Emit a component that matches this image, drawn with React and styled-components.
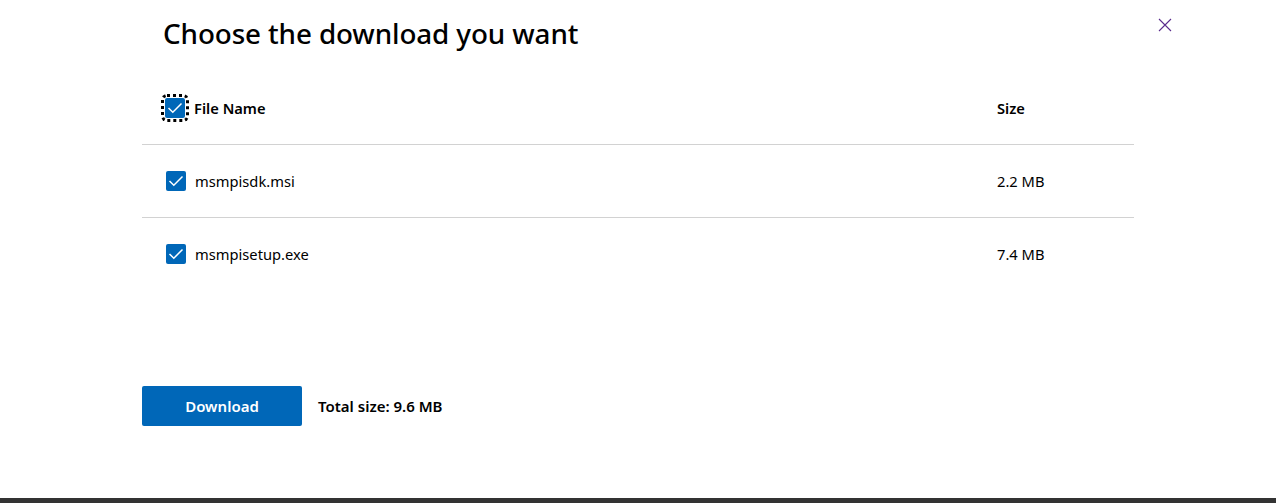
import styled, { createGlobalStyle } from "styled-components";

const Global = createGlobalStyle`
  html, body { margin: 0; padding: 0; background: #fff; }
  body { font-family: "Noto Sans", "Open Sans", sans-serif; color: #000; }
`;

const Page = styled.div`
  position: relative;
  height: 503px;
  display: flex;
  flex-direction: column;
`;

const Dialog = styled.div`
  flex: 1;
  padding: 0 142px;
`;

const Title = styled.h1`
  margin: 14px 0 0 21px;
  font-size: 27.8px;
  line-height: 38px;
  font-weight: 500;
  letter-spacing: -0.1px;
`;

const Close = styled.button`
  position: absolute;
  top: 17px;
  left: 1157px;
  width: 16px;
  height: 16px;
  padding: 0;
  border: none;
  background: none;
  cursor: pointer;
`;

const Table = styled.table`
  width: 992px;
  margin-top: 20px;
  border-collapse: collapse;
  font-size: 14.7px;

  th, td {
    height: 72px;
    padding: 0;
    border-bottom: 1px solid #d2d2d2;
  }
  th {
    text-align: left;
    font-weight: 600;
  }
  tbody tr:last-child td { border-bottom: none; }
  th:first-child, td:first-child { padding-left: 24px; }
  th:last-child, td:last-child { width: 137px; }
`;

const NameCell = styled.div`
  display: flex;
  align-items: center;
  gap: 9px;
`;

const Box = styled.span`
  width: 20px;
  height: 20px;
  flex: none;
  box-sizing: border-box;
  background: #0067b8;
  border-radius: 2px;
  display: flex;
  align-items: center;
  justify-content: center;
  outline: ${(p) => (p.$focus ? "3px dotted #000" : "none")};
  outline-offset: 1px;
  margin-left: ${(p) => (p.$focus ? "-1px" : "0")};
`;

const Footer = styled.div`
  display: flex;
  align-items: center;
  gap: 16px;
  margin-top: 96px;
`;

const DownloadBtn = styled.button`
  width: 160px;
  height: 40px;
  border: none;
  border-radius: 2px;
  background: #0067b8;
  color: #fff;
  font-family: inherit;
  font-size: 15px;
  font-weight: 600;
  cursor: pointer;
`;

const Total = styled.span`
  font-size: 15px;
  font-weight: 600;
`;

const BottomBar = styled.div`
  height: 5px;
  background: #333;
`;

const Check = () => (
  <svg width="16" height="12" viewBox="0 0 16 12">
    <path d="M1.5 6 L5.8 10.2 L14.5 1.5" fill="none" stroke="#fff" strokeWidth="1.5" />
  </svg>
);

const files = [
  { name: "msmpisdk.msi", size: "2.2 MB" },
  { name: "msmpisetup.exe", size: "7.4 MB" },
];

export default function App() {
  return (
    <Page>
      <Global />
      <Close aria-label="Close">
        <svg width="16" height="16" viewBox="0 0 16 16">
          <path d="M2 2 L14 14 M14 2 L2 14" stroke="#5b2d8e" strokeWidth="1.1" />
        </svg>
      </Close>
      <Dialog>
        <Title>Choose the download you want</Title>
        <Table>
          <thead>
            <tr>
              <th>
                <NameCell>
                  <Box $focus>
                    <Check />
                  </Box>
                  File Name
                </NameCell>
              </th>
              <th>Size</th>
            </tr>
          </thead>
          <tbody>
            {files.map((f) => (
              <tr key={f.name}>
                <td>
                  <NameCell>
                    <Box>
                      <Check />
                    </Box>
                    {f.name}
                  </NameCell>
                </td>
                <td>{f.size}</td>
              </tr>
            ))}
          </tbody>
        </Table>
        <Footer>
          <DownloadBtn>Download</DownloadBtn>
          <Total>Total size: 9.6 MB</Total>
        </Footer>
      </Dialog>
      <BottomBar />
    </Page>
  );
}
